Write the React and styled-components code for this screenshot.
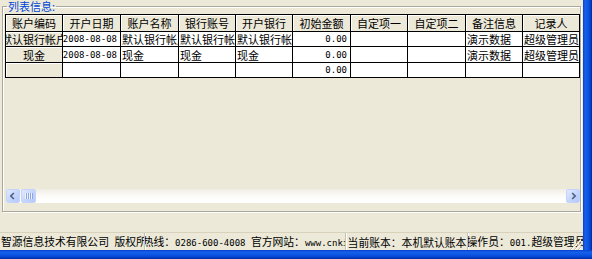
import React from 'react';
import styled, { createGlobalStyle } from 'styled-components';

const GlobalStyle = createGlobalStyle`
  html, body {
    margin: 0;
    padding: 0;
    background: #ece9d8;
  }
  body {
    font-family: "Noto Sans CJK SC", "DejaVu Sans", sans-serif;
    font-size: 11px;
  }
`;

const columns = [
  { title: '账户编码', width: 57, align: 'center', fixed: true },
  { title: '开户日期', width: 58, align: 'right' },
  { title: '账户名称', width: 58 },
  { title: '银行账号', width: 57 },
  { title: '开户银行', width: 57 },
  { title: '初始金额', width: 58, align: 'right' },
  { title: '自定项一', width: 57 },
  { title: '自定项二', width: 58 },
  { title: '备注信息', width: 57 },
  { title: '记录人', width: 57 },
];

const rows = [
  ['默认银行帐户', '2008-08-08', '默认银行帐户', '默认银行帐户', '默认银行帐户', '0.00', '', '', '演示数据', '超级管理员'],
  ['现金', '2008-08-08', '现金', '现金', '现金', '0.00', '', '', '演示数据', '超级管理员'],
  ['', '', '', '', '', '0.00', '', '', '', ''],
];

const statusItems = [
  { text: '智源信息技术有限公司 版权所有', width: 144, align: 'flex-start' },
  { text: '服务热线：0286-600-4008 官方网站：www.cnki.net', width: 201 },
  { text: '当前账本：本机默认账本', width: 122 },
  { text: '操作员：001.超级管理员', grow: true },
];

const alignMap = { left: 'flex-start', center: 'center', right: 'flex-end' };

// half-width runs are drawn in a monospace face, like the old bitmap font
const Mixed = ({ text }) =>
  text
    .split(/([\x20-\x7e]+)/)
    .filter(Boolean)
    .map((part, i) =>
      /^[\x20-\x7e]+$/.test(part) ? <Mono key={i}>{part}</Mono> : <span key={i}>{part}</span>
    );

const ChevronLeft = () => (
  <svg width="14" height="14" viewBox="0 0 14 14">
    <path d="M8 3.5 L4.5 7 L8 10.5" fill="none" stroke="#4d6185" strokeWidth="2" />
  </svg>
);

const ChevronRight = () => (
  <svg width="14" height="14" viewBox="0 0 14 14">
    <path d="M6 3.5 L9.5 7 L6 10.5" fill="none" stroke="#4d6185" strokeWidth="2" />
  </svg>
);

const ThumbGrip = () => (
  <svg width="8" height="6" viewBox="0 0 8 6">
    {[0, 2, 4, 6].map(x => (
      <g key={x}>
        <rect x={x} y="0" width="1" height="6" fill="#eef4fe" />
        <rect x={x + 1} y="0" width="1" height="6" fill="#8ca5e0" />
      </g>
    ))}
  </svg>
);

const SizeGrip = () => (
  <svg width="12" height="12" viewBox="0 0 12 12">
    {[0, 4, 8].map(o => (
      <g key={o}>
        <line x1={12} y1={o + 1} x2={o + 1} y2={12} stroke="#c2bfb0" strokeWidth="1" />
        <line x1={12} y1={o + 2} x2={o + 2} y2={12} stroke="#fff" strokeWidth="1" />
      </g>
    ))}
  </svg>
);

const App = () => (
  <>
    <GlobalStyle />
    <Window>
      <Body>
        <Main>
          <GroupBox>
            <Caption>列表信息:</Caption>
            <GridBox>
              <Table columns={columns.map(c => `${c.width}px`).join(' ')}>
                {columns.map(c => (
                  <HeaderCell key={c.title}>{c.title}</HeaderCell>
                ))}
                {rows.map((row, r) =>
                  row.map((value, i) => (
                    <Cell
                      key={`${r}-${i}`}
                      align={alignMap[columns[i].align || 'left']}
                      fixed={columns[i].fixed}
                    >
                      <Mixed text={value} />
                    </Cell>
                  ))
                )}
              </Table>
              <Fill />
              <ScrollBar>
                <ScrollButton>
                  <ChevronLeft />
                </ScrollButton>
                <Thumb>
                  <ThumbGrip />
                </Thumb>
                <Track />
                <ScrollButton>
                  <ChevronRight />
                </ScrollButton>
              </ScrollBar>
            </GridBox>
          </GroupBox>
          <Fill />
          <StatusBar>
            {statusItems.map((item, i) => (
              <StatusPanel
                key={i}
                first={i === 0}
                width={item.width}
                grow={item.grow}
                align={item.align || 'center'}
              >
                <StatusText>
                  <Mixed text={item.text} />
                </StatusText>
              </StatusPanel>
            ))}
            <Grip>
              <SizeGrip />
            </Grip>
          </StatusBar>
        </Main>
        <RightFrame />
      </Body>
      <BottomFrame />
    </Window>
  </>
);

const Window = styled.div`
  width: 592px;
  height: 259px;
  display: flex;
  flex-direction: column;
  background: #ece9d8;
  overflow: hidden;
`;

const Body = styled.div`
  display: flex;
  height: 250px;
`;

const Main = styled.div`
  width: 583px;
  display: flex;
  flex-direction: column;
`;

const RightFrame = styled.div`
  width: 9px;
  background: linear-gradient(to right, #0a3fd0 0, #1660ea 25%, #0c55e0 55%, #0442cf 80%, #002a9e 100%);
`;

const BottomFrame = styled.div`
  height: 9px;
  background: linear-gradient(to bottom, #0a3fd0 0, #1660ea 25%, #0c55e0 55%, #0442cf 80%, #002a9e 100%);
`;

const GroupBox = styled.fieldset`
  margin: 0 2px 0 2px;
  padding: 2px 0 7px 2px;
  width: 579px;
  box-sizing: border-box;
  border: 1px solid #aca899;
  box-shadow: inset 1px 1px 0 #fff, 1px 1px 0 #fff;
  min-width: 0;
`;

const Caption = styled.legend`
  margin-left: 2px;
  padding: 0 1px;
  color: #0046d5;
  font-size: 11px;
  line-height: 12px;
`;

const GridBox = styled.div`
  height: 190px;
  display: flex;
  flex-direction: column;
`;

const Table = styled.div`
  display: grid;
  grid-template-columns: ${props => props.columns};
  grid-template-rows: 17px 15px 16px 15px;
  width: max-content;
  border-top: 1px solid #000;
  border-left: 1px solid #000;
  background: #fff;
`;

const BaseCell = styled.div`
  box-sizing: border-box;
  display: flex;
  align-items: center;
  border-right: 1px solid #000;
  border-bottom: 1px solid #000;
  overflow: hidden;
  white-space: pre;
  font-size: 11px;
  line-height: 12px;
  color: #000;
`;

const HeaderCell = styled(BaseCell)`
  justify-content: center;
  background: #ece9d8;
  box-shadow: inset 1px 1px 0 #fff;
`;

const Cell = styled(BaseCell)`
  justify-content: ${props => props.align};
  padding: 0 ${props => (props.align === 'flex-end' ? '3px' : '0')} 0
    ${props => (props.align === 'flex-start' ? '1px' : '0')};
  background: ${props => (props.fixed ? '#ece9d8' : '#fff')};
  box-shadow: ${props => (props.fixed ? 'inset 1px 1px 0 #fff' : 'none')};
`;

const Mono = styled.span`
  font-family: "DejaVu Sans Mono", "Liberation Mono", monospace;
  font-size: 9px;
`;

const Fill = styled.div`
  flex: 1;
`;

const ScrollBar = styled.div`
  display: flex;
  height: 14px;
  margin: 0 0 1px 1px;
  background: linear-gradient(to bottom, #efede4 0, #f9f8f3 35%, #fefefd 70%, #fff 100%);
`;

const ScrollButton = styled.div`
  width: 14px;
  height: 14px;
  box-sizing: border-box;
  display: flex;
  align-items: center;
  justify-content: center;
  border: 1px solid #c3d3fd;
  border-radius: 2px;
  background: linear-gradient(135deg, #e2eafe 0, #c6d6fc 50%, #b5c8f8 100%);
`;

const Thumb = styled(ScrollButton)`
  width: 15px;
  margin-left: 1px;
`;

const Track = styled.div`
  flex: 1;
`;

const StatusBar = styled.div`
  position: relative;
  height: 18px;
  display: flex;
  border-top: 1px solid #d8d2bd;
  box-sizing: border-box;
`;

const StatusPanel = styled.div`
  width: ${props => (props.grow ? 'auto' : `${props.width}px`)};
  flex: ${props => (props.grow ? 1 : 'none')};
  display: flex;
  align-items: center;
  justify-content: ${props => props.align};
  overflow: hidden;
  white-space: pre;
  box-sizing: border-box;
  border-left: ${props => (props.first ? 'none' : '1px solid #c5c2b2')};
  box-shadow: ${props => (props.first ? 'none' : 'inset 1px 0 0 #fff')};
`;

const StatusText = styled.span`
  font-size: 10.8px;
  line-height: 12px;
  color: #000;
  padding-left: 1px;
`;

const Grip = styled.div`
  position: absolute;
  right: 2px;
  bottom: 0;
  width: 12px;
  height: 12px;
  display: flex;
`;

export default App;
